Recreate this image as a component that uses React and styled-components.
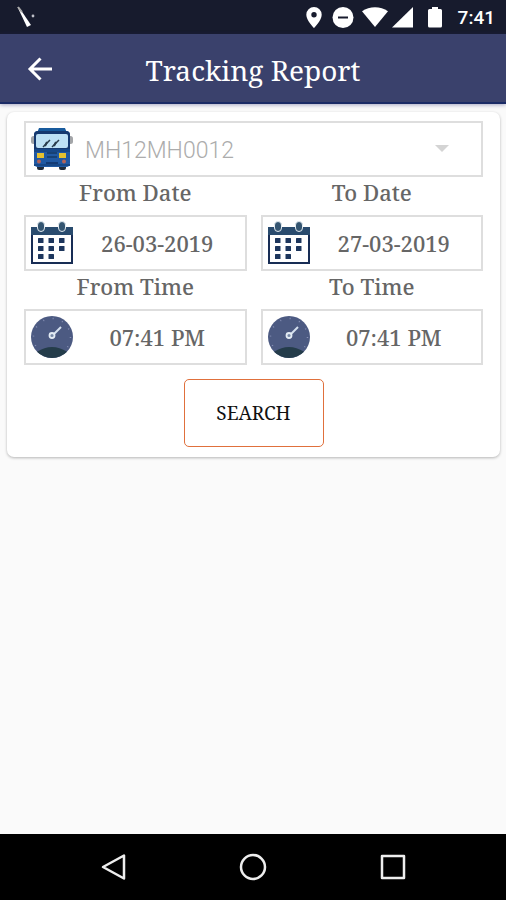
import React from "react";
import styled, { createGlobalStyle } from "styled-components";

const serif = `"Noto Serif", "DejaVu Serif Condensed", "DejaVu Serif", serif`;

const GlobalStyle = createGlobalStyle`
  * { box-sizing: border-box; }
  body { margin: 0; background: #fafafa; }
`;

const Screen = styled.div`
  display: flex;
  flex-direction: column;
  min-height: 100vh;
  font-family: ${serif};
`;

const StatusBar = styled.div`
  display: flex;
  align-items: center;
  justify-content: space-between;
  height: 34px;
  padding: 0 11px 0 16px;
  background: #171b2d;
  color: #fff;
`;

const StatusIcons = styled.div`
  display: flex;
  align-items: center;
`;

const Clock = styled.time`
  margin-left: 16px;
  padding-top: 2px;
  font: 500 19px/32px Roboto, sans-serif;
`;

const AppBar = styled.header`
  display: grid;
  grid-template-columns: 80px 1fr 80px;
  align-items: center;
  height: 70px;
  background: #3a416c;
  border-bottom: 2px solid #1b2b66;
  box-shadow: 0 1px 4px rgba(40, 40, 110, 0.4);
`;

const BackButton = styled.button`
  display: flex;
  align-items: center;
  justify-content: center;
  height: 68px;
  padding: 2px 0 0;
  border: 0;
  background: none;
  color: #fff;
`;

const Title = styled.h1`
  margin: 0;
  padding-top: 3px;
  color: #fff;
  font-size: 28px;
  font-weight: 400;
  line-height: 40px;
  text-align: center;
  white-space: nowrap;
`;

const Main = styled.main`
  flex: 1;
  padding: 8px 6px 8px 7px;
`;

const Card = styled.form`
  display: flex;
  flex-direction: column;
  align-items: center;
  padding: 9px 17px 10px;
  border-radius: 7px;
  background: #fff;
  box-shadow: 0 1px 3px rgba(0, 0, 0, 0.28);
`;

const FieldBox = styled.div`
  display: flex;
  align-items: center;
  width: 100%;
  height: 56px;
  padding-left: 4px;
  border: 2px solid #dedede;

  > svg {
    flex: none;
  }
`;

const VehicleSelect = styled.select`
  flex: 1;
  min-width: 0;
  height: 52px;
  padding: 2px 0 0 11px;
  border: 0;
  appearance: none;
  background: none;
  color: #acacac;
  opacity: 1;
  font: 300 23px Roboto, sans-serif;
`;

const CaretSlot = styled.span`
  display: flex;
  width: 46px;
`;

const FieldGrid = styled.div`
  display: grid;
  grid-template-columns: 1fr 1fr;
  column-gap: 14px;
  width: 100%;
`;

const Field = styled.div`
  min-width: 0;
`;

const Label = styled.label`
  display: block;
  height: 38px;
  color: #666;
  font-size: 22px;
  font-weight: 500;
  line-height: 30px;
  text-align: center;
`;

const ValueInput = styled.input`
  flex: 1;
  min-width: 0;
  height: 52px;
  padding: 0 8px 0 4px;
  border: 0;
  background: none;
  color: #666;
  font: 500 22px ${serif};
  text-align: center;
`;

const SearchButton = styled.button`
  width: 140px;
  height: 68px;
  margin-top: 14px;
  padding: 0;
  border: 1px solid #e0703c;
  border-radius: 5px;
  background: #fff;
  color: #111;
  font: 400 19px ${serif};
`;

const NavBar = styled.nav`
  display: flex;
  justify-content: center;
  gap: 84px;
  height: 66px;
  background: #000;
`;

const NavButton = styled.button`
  display: flex;
  align-items: center;
  justify-content: center;
  width: 56px;
  height: 66px;
  padding: 0;
  border: 0;
  background: none;
`;

const NotificationMark = () => (
  <svg width="22" height="22" viewBox="0 0 22 22" aria-hidden="true">
    <path d="M1.5 1 3.500 2l11.500 17-4 2Z" fill="#fff" />
    <path d="m2 1 4 5" stroke="#aaa" strokeWidth="2" />
    <circle cx="17" cy="10" r="1.4" fill="#bfc0c8" />
  </svg>
);

const StatusGlyphs = () => (
  <svg width="140" height="24" viewBox="0 0 140 24" fill="#fff" aria-hidden="true">
    <path
      fillRule="evenodd"
      d="M12 2a7.7 7.7 0 0 0-7.7 7.7C4.300 15.500 12 23 12 23s7.700-7.500 7.700-13.300A7.700 7.700 0 0 0 12 2Zm0 5a2.700 2.700 0 1 1 0 5.400A2.700 2.700 0 0 1 12 7Z"
    />
    <circle cx="41" cy="12.500" r="10.500" />
    <path d="M36 12.500h10" stroke="#171b2d" strokeWidth="2" />
    <path d="M60 6.200C67.500.8 78.500.8 86 6.200L73 22Z" />
    <path d="M111 2v20.500H90Z" />
    <path d="M130 2h6v2h2.500q1.500 0 1.500 1.500V21q0 1.500-1.500 1.500h-11Q126 22.500 126 21V5.500Q126 4 127.500 4h2.500Z" />
  </svg>
);

const BusIcon = () => (
  <svg width="44" height="44" viewBox="0 0 44 44" aria-hidden="true">
    <rect x="7" y="37" width="7" height="6" rx="2" fill="#202b3a" />
    <rect x="29" y="37" width="7" height="6" rx="2" fill="#202b3a" />
    <rect x="1" y="9" width="6" height="8" rx="2.500" fill="#a3a5a8" />
    <rect x="37" y="9" width="6" height="8" rx="2.500" fill="#a3a5a8" />
    <path d="M9 1h26l2 5H7Z" fill="#195b9d" />
    <rect x="4" y="4" width="36" height="36" rx="4" fill="#2059a3" />
    <path d="M4 8q0-4 4-4h28q4 0 4 4v14H4Z" fill="#16396f" />
    <rect x="6" y="7" width="32" height="14" rx="2" fill="#bee1f5" />
    <path d="m13 20 7-7M22 20l7-7" stroke="#293c4c" strokeWidth="1.500" />
    <path d="m15 19 2-4M24 19l2-4" stroke="#293c4c" strokeWidth="2" />
    <path d="M4 22h36v3H4Z" fill="#174888" />
    <path d="M17 25h10v2H17ZM17 29h10v2H17Z" fill="#174276" />
    <rect x="7" y="26" width="7" height="5" fill="#e5c130" />
    <rect x="29" y="26" width="7" height="5" fill="#e5c130" />
    <circle cx="9" cy="34.500" r="2" fill="#b46358" />
    <circle cx="34" cy="34.500" r="2" fill="#b46358" />
    <path d="M16 35h12v3H16Z" fill="#133b75" />
    <path d="M4 38h36" stroke="#174888" strokeWidth="2" />
  </svg>
);

const CalendarIcon = () => (
  <svg width="44" height="44" viewBox="0 0 44 44" aria-hidden="true">
    <rect x="2" y="7" width="40" height="35" fill="#fff" stroke="#182d55" strokeWidth="2" />
    <path d="M1 6h42v8H1Z" fill="#294b6e" />
    {[11, 32].map((x) => (
      <rect key={x} x={x - 3.5} y="0.500" width="7" height="10" rx="3.500" fill="#345571" stroke="#e2eaf0" />
    ))}
    {[17, 25, 33].map((y, row) =>
      [8, 18.500, 29].slice(0, row === 2 ? 2 : 3).map((x) => (
        <rect key={`${x}-${y}`} x={x} y={y} width="5.500" height="5" rx="0.500" fill="#1d365d" />
      ))
    )}
  </svg>
);

const DialIcon = () => (
  <svg width="44" height="44" viewBox="0 0 44 44" aria-hidden="true">
    <circle cx="22" cy="22" r="21" fill="#4c5a82" />
    <circle
      cx="22"
      cy="22"
      r="18.500"
      fill="none"
      stroke="#8790b5"
      strokeWidth="1.500"
      strokeDasharray="1 8.700"
    />
    <path d="M7 36.700q15-9.500 30 0a21 21 0 0 1-30 0Z" fill="#243c4a" />
    <path d="m24 19 7-7" stroke="#d5e0ee" strokeWidth="2" />
    <circle cx="22" cy="20.500" r="2.500" fill="#7688a6" stroke="#e3ebf4" strokeWidth="1.800" />
  </svg>
);

const fields = [
  { id: "from-date", label: "From Date", value: "26-03-2019", Icon: CalendarIcon },
  { id: "to-date", label: "To Date", value: "27-03-2019", Icon: CalendarIcon },
  { id: "from-time", label: "From Time", value: "07:41 PM", Icon: DialIcon },
  { id: "to-time", label: "To Time", value: "07:41 PM", Icon: DialIcon },
];

export default function App() {
  return (
    <Screen>
      <GlobalStyle />
      <StatusBar>
        <NotificationMark />
        <StatusIcons>
          <StatusGlyphs />
          <Clock>7:41</Clock>
        </StatusIcons>
      </StatusBar>
      <AppBar>
        <BackButton type="button" aria-label="Back">
          <svg width="26" height="26" viewBox="0 0 26 26" fill="none" stroke="currentColor" strokeWidth="3">
            <path d="M25 13H3M13.500 2.500 3 13l10.500 10.500" />
          </svg>
        </BackButton>
        <Title>Tracking Report</Title>
      </AppBar>
      <Main>
        <Card onSubmit={(event) => event.preventDefault()}>
          <FieldBox>
            <BusIcon />
            <VehicleSelect aria-label="Vehicle" disabled>
              <option>MH12MH0012</option>
            </VehicleSelect>
            <CaretSlot>
              <svg width="14" height="8" viewBox="0 0 14 8" aria-hidden="true">
                <path d="M0 0h14L7 7Z" fill="#d4d4d4" />
              </svg>
            </CaretSlot>
          </FieldBox>
          <FieldGrid>
            {fields.map(({ id, label, value, Icon }) => (
              <Field key={id}>
                <Label htmlFor={id}>{label}</Label>
                <FieldBox>
                  <Icon />
                  <ValueInput id={id} defaultValue={value} />
                </FieldBox>
              </Field>
            ))}
          </FieldGrid>
          <SearchButton type="submit">SEARCH</SearchButton>
        </Card>
      </Main>
      <NavBar aria-label="System navigation">
        <NavButton type="button" aria-label="Back">
          <svg width="28" height="28" viewBox="0 0 28 28" fill="none" stroke="#eee" strokeWidth="2.500" strokeLinejoin="round">
            <path d="M25 2.500v23L4 14Z" />
          </svg>
        </NavButton>
        <NavButton type="button" aria-label="Home">
          <svg width="28" height="28" viewBox="0 0 28 28" fill="none" stroke="#eee" strokeWidth="2.500">
            <circle cx="14" cy="14" r="12" />
          </svg>
        </NavButton>
        <NavButton type="button" aria-label="Recent apps">
          <svg width="28" height="28" viewBox="0 0 28 28" fill="none" stroke="#eee" strokeWidth="2.500" strokeLinejoin="round">
            <path d="M3 3h22v22H3Z" />
          </svg>
        </NavButton>
      </NavBar>
    </Screen>
  );
}
